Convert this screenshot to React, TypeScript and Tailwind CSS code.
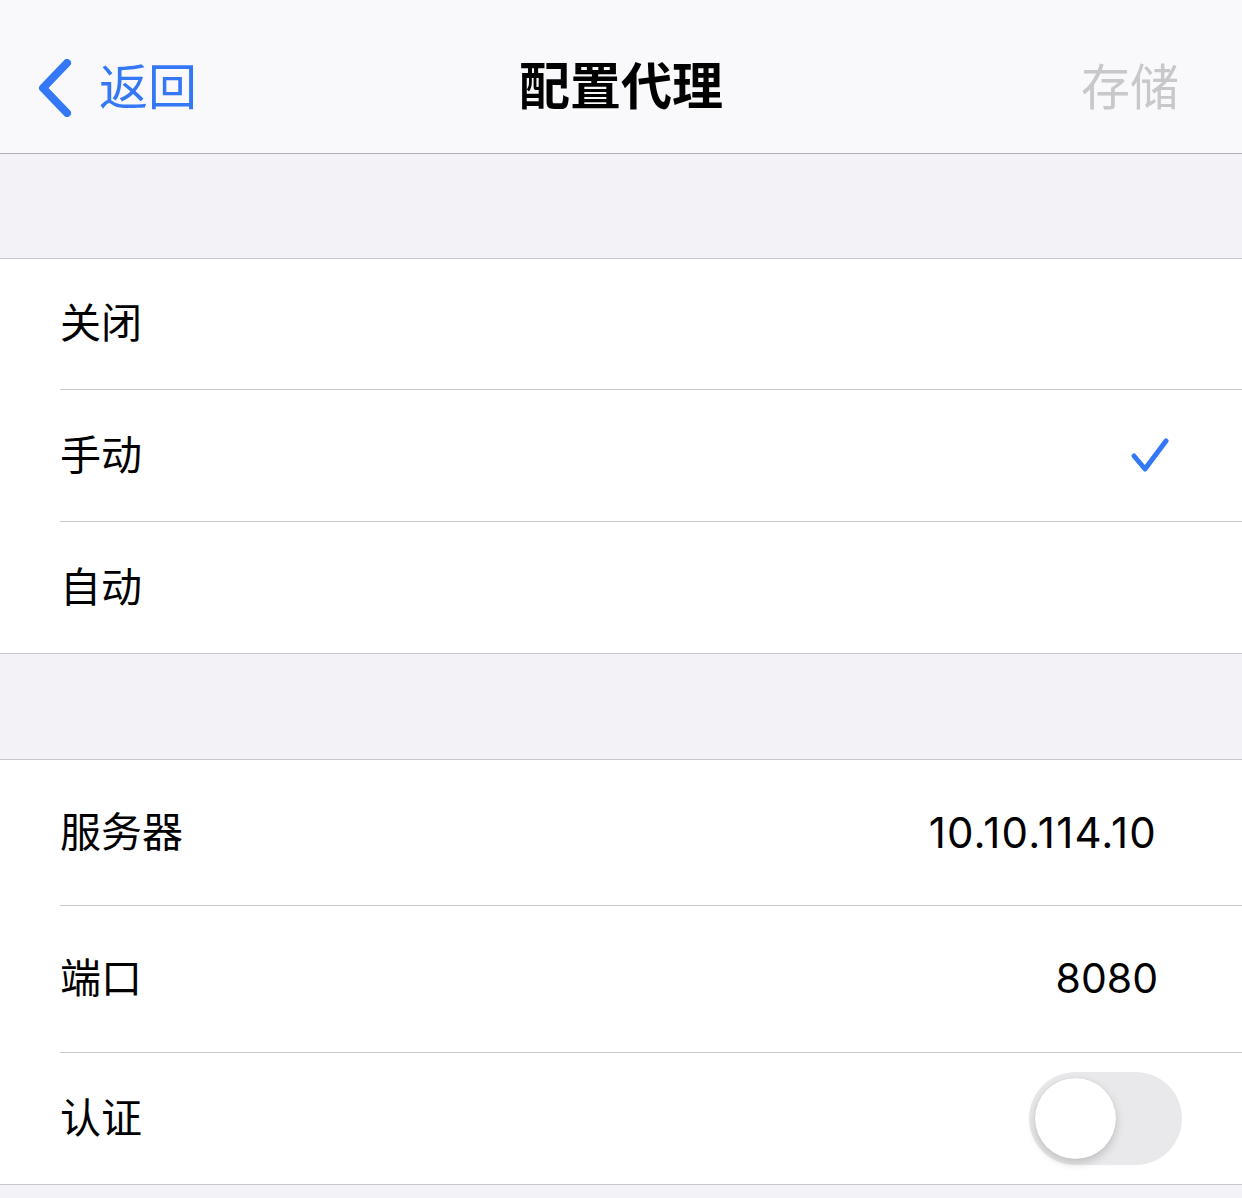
import React from "react";

const cjk = { fontFamily: 'Inter, "Noto Sans CJK SC", sans-serif' };

function Chevron() {
  return (
    <svg width="36" height="58" viewBox="0 0 36 58" className="block">
      <path d="M30 4 L6 29 L30 54" fill="none" stroke="#3478f6" strokeWidth="8" strokeLinecap="round" strokeLinejoin="round" />
    </svg>
  );
}

function Check() {
  return (
    <svg width="40" height="40" viewBox="0 0 40 40" className="block">
      <path d="M4 20 L15 33 L36 5" fill="none" stroke="#3478f6" strokeWidth="5" strokeLinecap="round" strokeLinejoin="round" />
    </svg>
  );
}

function Toggle() {
  return (
    <div className="relative h-[93px] w-[153px] rounded-full bg-[#e9e9eb]">
      <div className="absolute left-[6px] top-[6px] h-[81px] w-[81px] rounded-full bg-white shadow-[0_4px_10px_rgba(0,0,0,0.18),0_0_1px_rgba(0,0,0,0.15)]" />
    </div>
  );
}

function Row({ label, right, h, last }: { label: string; right?: React.ReactNode; h: string; last?: boolean }) {
  return (
    <div className={`flex ${h} items-stretch pl-[60px]`}>
      <div className={`flex flex-1 items-center justify-between ${last ? "" : "border-b border-[#c8c7cc]"}`}>
        <span className="text-[41px] text-black">{label}</span>
        {right}
      </div>
    </div>
  );
}

export default function App() {
  return (
    <div className="flex min-h-[1198px] w-[1242px] flex-col bg-[#f2f2f7]" style={cjk}>
      <header className="relative flex h-[154px] items-center border-b border-[#b1b1b5] bg-[#f9f9fb] pt-[22px]">
        <div className="flex items-center gap-[26px] pl-[37px]">
          <Chevron />
          <span className="text-[49px] text-[#3478f6]">返回</span>
        </div>
        <div className="absolute inset-x-0 flex justify-center">
          <span className="text-[51px] font-bold text-black">配置代理</span>
        </div>
        <div className="ml-auto pr-[63px]">
          <span className="text-[49px] text-[#c7c7cc]">存储</span>
        </div>
      </header>

      <div className="h-[104px]" />

      <section className="border-y border-[#c8c7cc] bg-white">
        <Row label="关闭" h="h-[131px]" />
        <Row label="手动" h="h-[132px]" right={<div className="pr-[72px]"><Check /></div>} />
        <Row label="自动" h="h-[131px]" last />
      </section>

      <div className="h-[105px]" />

      <section className="border-y border-[#c8c7cc] bg-white">
        <Row label="服务器" h="h-[146px]" right={<span className="pr-[85px] text-[42px] tracking-[1.2px] text-black">10.10.114.10</span>} />
        <Row label="端口" h="h-[147px]" right={<span className="pr-[84px] text-[41px] text-black">8080</span>} />
        <Row label="认证" h="h-[131px]" last right={<div className="pr-[60px]"><Toggle /></div>} />
      </section>

      <div className="flex-1" />
    </div>
  );
}
